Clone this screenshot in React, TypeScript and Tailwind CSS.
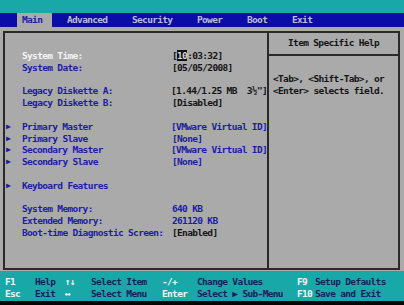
import React from "react";

type Row = {
  arrow?: boolean;
  label?: string;
  value?: React.ReactNode;
  sel?: boolean;
  blueVal?: boolean;
};

const rows: Row[] = [
  {
    label: "System Time:",
    sel: true,
    value: (
      <>
        [<span className="bg-[#101010] text-[#d8d8d8]">10</span>:03:32]
      </>
    ),
  },
  { label: "System Date:", value: "[05/05/2008]" },
  {},
  { label: "Legacy Diskette A:", value: "[1.44/1.25 MB  3½\"]" },
  { label: "Legacy Diskette B:", value: "[Disabled]" },
  {},
  { arrow: true, label: "Primary Master", value: "[VMware Virtual ID]", blueVal: true },
  { arrow: true, label: "Primary Slave", value: "[None]", blueVal: true },
  { arrow: true, label: "Secondary Master", value: "[VMware Virtual ID]", blueVal: true },
  { arrow: true, label: "Secondary Slave", value: "[None]", blueVal: true },
  {},
  { arrow: true, label: "Keyboard Features" },
  {},
  { label: "System Memory:", value: "640 KB", blueVal: true },
  { label: "Extended Memory:", value: "261120 KB", blueVal: true },
  { label: "Boot-time Diagnostic Screen:", value: "[Enabled]" },
];

const menu: { name: string; w: string }[] = [
  { name: "Advanced", w: "w-[65px]" },
  { name: "Security", w: "w-[65px]" },
  { name: "Power", w: "w-[50px]" },
  { name: "Boot", w: "w-[45px]" },
  { name: "Exit", w: "w-[45px]" },
];

const footer: string[][] = [
  ["F1", "Help", "↑↓", "Select Item", "-/+", "Change Values", "F9", "Setup Defaults"],
  ["Esc", "Exit", "↔", "Select Menu", "Enter", "Select ▶ Sub-Menu", "F10", "Save and Exit"],
];
const fw = ["w-[30px]", "w-[30px]", "w-[26px]", "w-[71px]", "w-[35px]", "w-[100px]", "w-[18px]", "flex-1"];

export default function App() {
  return (
    <div className="w-[404px] h-[305px] bg-[#aaaaaa] flex flex-col overflow-hidden font-['DejaVu_Sans_Mono','Liberation_Mono',monospace] font-bold text-[9.5px] tracking-[-0.67px] whitespace-pre">
      <div className="h-[13px] bg-[#18a8a8]" />
      <div className="h-[14px] bg-[#0c0ca8] flex items-stretch pl-[17px] text-[#bcbcd8]">
        <div className="w-[35px] pl-[5px] bg-[#aaaaaa] text-[#1c1ca8] flex items-center">Main</div>
        <div className="w-[15px]" />
        {menu.map((m) => (
          <div key={m.name} className={`${m.w} flex items-center`}>
            {m.name}
          </div>
        ))}
      </div>
      <div className="pt-[4px] pl-[3px] pr-[4px]">
        <div className="h-[239px] border-2 border-[#2a2a2a] flex">
          <div className="w-[264px] border-r-2 border-[#2a2a2a] pt-[17px] leading-[11.8px]">
            {rows.map((r, i) => (
              <div key={i} className="flex h-[11.8px]">
                <div className="w-[17px] pl-[1px] text-[#1c1ca8] text-[8px]">{r.arrow ? "▶" : ""}</div>
                <div className={`w-[150px] ${r.sel ? "text-[#f4f4f4]" : "text-[#1c1ca8]"}`}>{r.label ?? ""}</div>
                <div className={r.blueVal ? "text-[#1c1ca8]" : "text-[#141414]"}>{r.value ?? ""}</div>
              </div>
            ))}
          </div>
          <div className="flex-1 flex flex-col text-[#141414]">
            <div className="h-[23px] border-b-2 border-[#2a2a2a] flex items-center justify-center">Item Specific Help</div>
            <div className="pt-[17px] pl-[4px] leading-[12px]">
              <div>{"<Tab>, <Shift-Tab>, or"}</div>
              <div>{"<Enter> selects field."}</div>
            </div>
          </div>
        </div>
      </div>
      <div className="mt-[1px] h-[30px] bg-[#18a8a8] pt-[5px] pl-[5px] leading-[12px]">
        {footer.map((row, ri) => (
          <div key={ri} className="flex h-[12px]">
            {row.map((t, ci) => (
              <div key={ci} className={`${fw[ci]} ${ci % 2 === 0 ? "text-[#f4f4f4]" : "text-[#141c5c]"}`}>
                {t}
              </div>
            ))}
          </div>
        ))}
      </div>
      <div className="flex-1 bg-[#050505]" />
    </div>
  );
}
